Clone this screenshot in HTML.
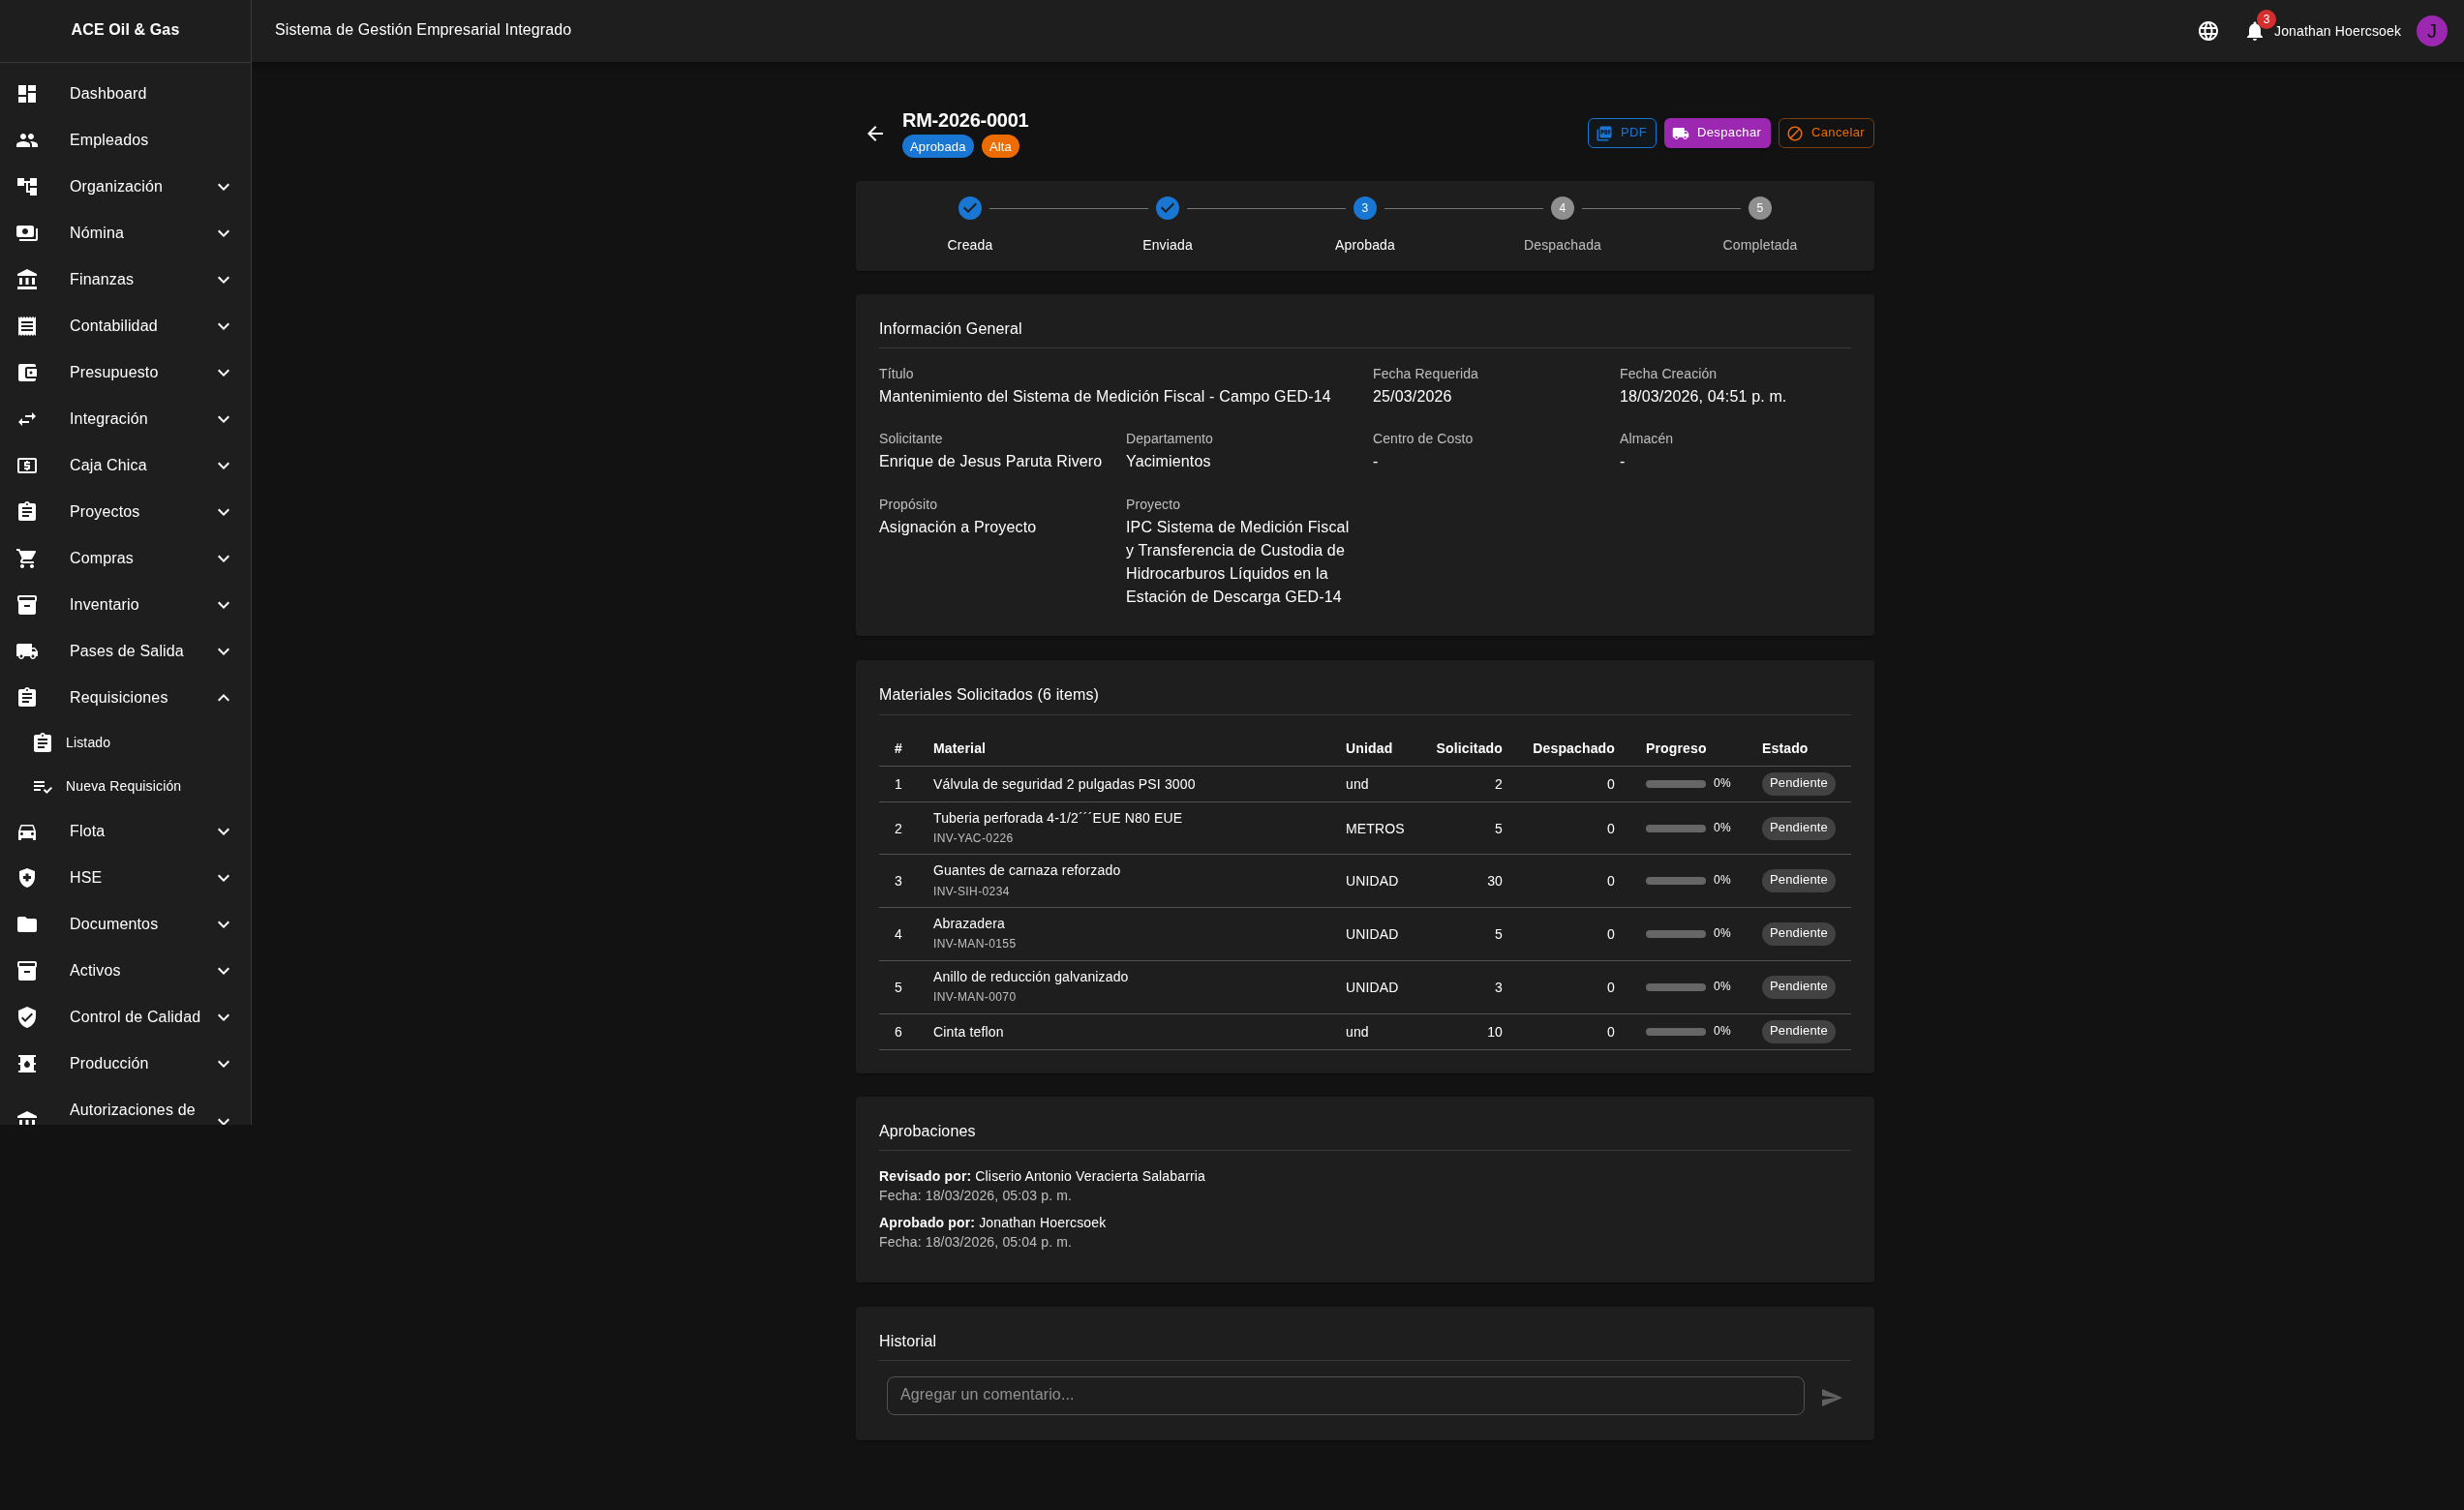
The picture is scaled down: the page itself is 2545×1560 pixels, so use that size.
<!DOCTYPE html>
<html lang="es">
<head>
<meta charset="utf-8">
<title>RM-2026-0001</title>
<style>
*{box-sizing:border-box;margin:0;padding:0}
html,body{width:2545px;height:1560px;overflow:hidden}
body{background:#121212;color:#fff;font-family:"Liberation Sans",sans-serif;font-size:16px;letter-spacing:.15px;position:relative}
.abs{position:absolute}
svg{display:block;fill:currentColor}
/* sidebar */
#side{position:absolute;z-index:2;left:0;top:0;width:260px;height:1162px;background:#1e1e1e;border-right:1px solid rgba(255,255,255,.12);overflow:hidden}
#side .brand{height:65px;border-bottom:1px solid rgba(255,255,255,.12);text-align:center;font-weight:700;font-size:16px;line-height:62px;letter-spacing:.12px}
#side ul{list-style:none;padding-top:8px}
#side li{position:relative;height:48px;display:flex;align-items:center}
#side li .ic{position:absolute;left:16px;top:12px;width:24px;height:24px}
#side li .tx{position:absolute;left:72px;top:12px;line-height:24px;font-size:16px;white-space:nowrap}
#side li .ch{position:absolute;left:219px;top:12px;width:24px;height:24px}
#side li.sub{height:45px}
#side li.sub .ic{left:32px;top:11px}
#side li.sub .tx{left:68px;top:12px;font-size:14px;line-height:21px}
#side li.two{height:72px}
#side li.two .ic{top:24px}
#side li.two .ch{top:24px}
#side li.two .tx{top:12px;white-space:normal;width:140px}
/* appbar */
#bar{position:absolute;z-index:1;left:260px;top:0;width:2285px;height:64px;background:#1e1e1e;box-shadow:0 2px 4px -1px rgba(0,0,0,.2),0 4px 5px 0 rgba(0,0,0,.14),0 1px 10px 0 rgba(0,0,0,.12)}
#bar .title{position:absolute;left:24px;top:19px;line-height:24px;font-size:16px;letter-spacing:.12px}
/* papers */
.paper{position:absolute;left:884px;width:1052px;background:#1e1e1e;border-radius:4px;box-shadow:0 2px 1px -1px rgba(0,0,0,.2),0 1px 1px 0 rgba(0,0,0,.14),0 1px 3px 0 rgba(0,0,0,.12)}
.ptitle{position:absolute;left:24px;line-height:24px;font-size:16px;white-space:nowrap}
.pdiv{position:absolute;left:24px;right:24px;height:1px;background:rgba(255,255,255,.12)}
.lbl{position:absolute;font-size:14px;line-height:22px;color:rgba(255,255,255,.7);letter-spacing:.1px;white-space:nowrap}
.val{position:absolute;font-size:16px;line-height:24px;white-space:nowrap}
.chip{position:absolute;height:24px;border-radius:12px;font-size:13px;line-height:24px;padding:0 8px;white-space:nowrap}
.btn{position:absolute;height:31px;border-radius:6px;font-size:13px;line-height:23px;letter-spacing:.37px;white-space:nowrap}
.conn{position:absolute;top:215px;height:1px;background:#757575}
.sicon{position:absolute;top:203px;width:24px;height:24px;border-radius:12px;font-size:12px;line-height:24px;text-align:center;letter-spacing:.4px}
.slbl{position:absolute;top:243px;width:204px;text-align:center;font-size:14px;line-height:20px}
.hdiv{position:absolute;left:908px;width:1004px;height:1px;background:rgba(255,255,255,.12)}
.th{position:absolute;top:761px;font-size:14px;font-weight:700;line-height:24px;white-space:nowrap}
.td{position:absolute;font-size:14px;line-height:20px;white-space:nowrap}
.td b{font-weight:700}
.r{width:100px;text-align:right}
.sec{color:rgba(255,255,255,.7)}
.cap{position:absolute;font-size:12px;line-height:20px;letter-spacing:.4px;color:rgba(255,255,255,.7);white-space:nowrap}
.tb{position:absolute;left:908px;width:1004px;height:1px;background:#515151}
.bar{position:absolute;left:1700px;width:62px;height:8px;border-radius:4px;background:#666}
</style>
</head>
<body>
<div id="root" style="position:absolute;left:0;top:0;width:2545px;height:1560px;will-change:transform">
<!-- SIDEBAR -->
<div id="side">
  <div class="brand">ACE Oil &amp; Gas</div>
  <ul>
    <li><svg class="ic" viewBox="0 0 24 24"><path d="M3 13h8V3H3v10zm0 8h8v-6H3v6zm10 0h8V11h-8v10zm0-18v6h8V3h-8z"/></svg><span class="tx">Dashboard</span></li>
    <li><svg class="ic" viewBox="0 0 24 24"><path d="M16 11c1.66 0 2.99-1.34 2.99-3S17.66 5 16 5c-1.66 0-3 1.34-3 3s1.34 3 3 3zm-8 0c1.66 0 2.99-1.34 2.99-3S9.66 5 8 5C6.34 5 5 6.34 5 8s1.34 3 3 3zm0 2c-2.33 0-7 1.17-7 3.5V19h14v-2.5c0-2.33-4.67-3.5-7-3.5zm8 0c-.29 0-.62.02-.97.05 1.16.84 1.97 1.97 1.97 3.45V19h6v-2.5c0-2.33-4.67-3.5-7-3.5z"/></svg><span class="tx">Empleados</span></li>
    <li><svg class="ic" viewBox="0 0 24 24"><path d="M22 11V3h-7v3H9V3H2v8h7V8h2v10h4v3h7v-8h-7v3h-2V8h2v3z"/></svg><span class="tx">Organización</span><svg class="ch" viewBox="0 0 24 24"><path d="M16.59 8.59 12 13.17 7.41 8.59 6 10l6 6 6-6z"/></svg></li>
    <li><svg class="ic" viewBox="0 0 24 24"><path d="M19 14V6c0-1.1-.9-2-2-2H3c-1.1 0-2 .9-2 2v8c0 1.1.9 2 2 2h14c1.1 0 2-.9 2-2zm-9-1c-1.66 0-3-1.34-3-3s1.34-3 3-3 3 1.34 3 3-1.34 3-3 3zm13-6v11c0 1.1-.9 2-2 2H4v-2h17V7h2z"/></svg><span class="tx">Nómina</span><svg class="ch" viewBox="0 0 24 24"><path d="M16.59 8.59 12 13.17 7.41 8.59 6 10l6 6 6-6z"/></svg></li>
    <li><svg class="ic" viewBox="0 0 24 24"><path d="M4 10h3v7H4zm6.5 0h3v7h-3zM2 19h20v3H2zm15-9h3v7h-3zm-5-9L2 6v2h20V6z"/></svg><span class="tx">Finanzas</span><svg class="ch" viewBox="0 0 24 24"><path d="M16.59 8.59 12 13.17 7.41 8.59 6 10l6 6 6-6z"/></svg></li>
    <li><svg class="ic" viewBox="0 0 24 24"><path d="M18 17H6v-2h12v2zm0-4H6v-2h12v2zm0-4H6V7h12v2zM3 22l1.5-1.5L6 22l1.5-1.5L9 22l1.5-1.5L12 22l1.5-1.5L15 22l1.5-1.5L18 22l1.5-1.5L21 22V2l-1.5 1.5L18 2l-1.5 1.5L15 2l-1.5 1.5L12 2l-1.5 1.5L9 2 7.5 3.5 6 2 4.5 3.5 3 2v20z"/></svg><span class="tx">Contabilidad</span><svg class="ch" viewBox="0 0 24 24"><path d="M16.59 8.59 12 13.17 7.41 8.59 6 10l6 6 6-6z"/></svg></li>
    <li><svg class="ic" viewBox="0 0 24 24"><path d="M21 18v1c0 1.1-.9 2-2 2H5c-1.11 0-2-.9-2-2V5c0-1.1.89-2 2-2h14c1.1 0 2 .9 2 2v1h-9c-1.11 0-2 .9-2 2v8c0 1.1.89 2 2 2h9zm-9-2h10V8H12v8zm4-2.5c-.83 0-1.5-.67-1.5-1.5s.67-1.5 1.5-1.5 1.5.67 1.5 1.5-.67 1.5-1.5 1.5z"/></svg><span class="tx">Presupuesto</span><svg class="ch" viewBox="0 0 24 24"><path d="M16.59 8.59 12 13.17 7.41 8.59 6 10l6 6 6-6z"/></svg></li>
    <li><svg class="ic" viewBox="0 0 24 24"><path d="M6.99 11 3 15l3.99 4v-3H14v-2H6.99v-3zM21 9l-3.99-4v3H10v2h7.01v3L21 9z"/></svg><span class="tx">Integración</span><svg class="ch" viewBox="0 0 24 24"><path d="M16.59 8.59 12 13.17 7.41 8.59 6 10l6 6 6-6z"/></svg></li>
    <li><svg class="ic" viewBox="0 0 24 24"><path d="M11 17h2v-1h1c.55 0 1-.45 1-1v-3c0-.55-.45-1-1-1h-3v-1h4V8h-2V7h-2v1h-1c-.55 0-1 .45-1 1v3c0 .55.45 1 1 1h3v1H9v2h2v1zm9-13H4c-1.11 0-1.99.89-1.99 2L2 18c0 1.11.89 2 2 2h16c1.11 0 2-.89 2-2V6c0-1.11-.89-2-2-2zm0 14H4V6h16v12z"/></svg><span class="tx">Caja Chica</span><svg class="ch" viewBox="0 0 24 24"><path d="M16.59 8.59 12 13.17 7.41 8.59 6 10l6 6 6-6z"/></svg></li>
    <li><svg class="ic" viewBox="0 0 24 24"><path d="M19 3h-4.18C14.4 1.84 13.3 1 12 1c-1.3 0-2.4.84-2.82 2H5c-1.1 0-2 .9-2 2v14c0 1.1.9 2 2 2h14c1.1 0 2-.9 2-2V5c0-1.1-.9-2-2-2zm-7 0c.55 0 1 .45 1 1s-.45 1-1 1-1-.45-1-1 .45-1 1-1zm2 14H7v-2h7v2zm3-4H7v-2h10v2zm0-4H7V7h10v2z"/></svg><span class="tx">Proyectos</span><svg class="ch" viewBox="0 0 24 24"><path d="M16.59 8.59 12 13.17 7.41 8.59 6 10l6 6 6-6z"/></svg></li>
    <li><svg class="ic" viewBox="0 0 24 24"><path d="M7 18c-1.1 0-1.99.9-1.99 2S5.9 22 7 22s2-.9 2-2-.9-2-2-2zM1 2v2h2l3.6 7.59-1.35 2.45c-.16.28-.25.61-.25.96 0 1.1.9 2 2 2h12v-2H7.42c-.14 0-.25-.11-.25-.25l.03-.12.9-1.63h7.45c.75 0 1.41-.41 1.75-1.03l3.58-6.49c.08-.14.12-.31.12-.48 0-.55-.45-1-1-1H5.21l-.94-2H1zm16 16c-1.1 0-1.99.9-1.99 2s.89 2 1.99 2 2-.9 2-2-.9-2-2-2z"/></svg><span class="tx">Compras</span><svg class="ch" viewBox="0 0 24 24"><path d="M16.59 8.59 12 13.17 7.41 8.59 6 10l6 6 6-6z"/></svg></li>
    <li><svg class="ic" viewBox="0 0 24 24"><path d="M20 2H4c-1 0-2 .9-2 2v3.01c0 .72.43 1.34 1 1.69V20c0 1.1 1.1 2 2 2h14c.9 0 2-.9 2-2V8.7c.57-.35 1-.97 1-1.69V4c0-1.1-1-2-2-2zm-5 12H9v-2h6v2zm5-7H4V4l16-.02V7z"/></svg><span class="tx">Inventario</span><svg class="ch" viewBox="0 0 24 24"><path d="M16.59 8.59 12 13.17 7.41 8.59 6 10l6 6 6-6z"/></svg></li>
    <li><svg class="ic" viewBox="0 0 24 24"><path d="M20 8h-3V4H3c-1.1 0-2 .9-2 2v11h2c0 1.66 1.34 3 3 3s3-1.34 3-3h6c0 1.66 1.34 3 3 3s3-1.34 3-3h2v-5l-3-4zM6 18.5c-.83 0-1.5-.67-1.5-1.5s.67-1.5 1.5-1.5 1.5.67 1.5 1.5-.67 1.5-1.5 1.5zm13.5-9 1.96 2.5H17V9.5h2.5zm-1.5 9c-.83 0-1.5-.67-1.5-1.5s.67-1.5 1.5-1.5 1.5.67 1.5 1.5-.67 1.5-1.5 1.5z"/></svg><span class="tx">Pases de Salida</span><svg class="ch" viewBox="0 0 24 24"><path d="M16.59 8.59 12 13.17 7.41 8.59 6 10l6 6 6-6z"/></svg></li>
    <li><svg class="ic" viewBox="0 0 24 24"><path d="M19 3h-4.18C14.4 1.840 13.3 1 12 1c-1.3 0-2.4.84-2.820 2H5c-1.1 0-2 .9-2 2v14c0 1.1.9 2 2 2h14c1.1 0 2-.9 2-2V5c0-1.1-.9-2-2-2zm-7 0c.55 0 1 .45 1 1s-.45 1-1 1-1-.45-1-1 .45-1 1-1zm2 14H7v-2h7v2zm3-4H7v-2h10v2zm0-4H7V7h10v2z"/></svg><span class="tx">Requisiciones</span><svg class="ch" viewBox="0 0 24 24"><path d="m12 8-6 6 1.41 1.41L12 10.83l4.59 4.58L18 14z"/></svg></li>
    <li class="sub"><svg class="ic" viewBox="0 0 24 24"><path d="M19 3h-4.18C14.4 1.84 13.3 1 12 1c-1.3 0-2.4.84-2.82 2H5c-1.1 0-2 .9-2 2v14c0 1.1.9 2 2 2h14c1.1 0 2-.9 2-2V5c0-1.1-.9-2-2-2zm-7 0c.55 0 1 .45 1 1s-.45 1-1 1-1-.45-1-1 .45-1 1-1zm2 14H7v-2h7v2zm3-4H7v-2h10v2zm0-4H7V7h10v2z"/></svg><span class="tx">Listado</span></li>
    <li class="sub"><svg class="ic" viewBox="0 0 24 24"><path d="M14 10H3v2h11v-2zm0-4H3v2h11V6zM3 16h7v-2H3v2zm17.59-4.07-4.25 4.24-2.12-2.12-1.41 1.41L16.34 19 22 13.34l-1.41-1.41z"/></svg><span class="tx">Nueva Requisición</span></li>
    <li><svg class="ic" viewBox="0 0 24 24"><path d="M18.92 6.01C18.72 5.42 18.16 5 17.5 5h-11c-.66 0-1.21.42-1.42 1.01L3 12v8c0 .55.45 1 1 1h1c.55 0 1-.45 1-1v-1h12v1c0 .55.45 1 1 1h1c.55 0 1-.45 1-1v-8l-2.08-5.99zM6.5 16c-.83 0-1.5-.67-1.5-1.5S5.67 13 6.5 13s1.5.67 1.5 1.5S7.33 16 6.5 16zm11 0c-.83 0-1.5-.67-1.5-1.5s.67-1.5 1.5-1.5 1.5.67 1.5 1.5-.67 1.5-1.5 1.5zM5 11l1.5-4.5h11L19 11H5z"/></svg><span class="tx">Flota</span><svg class="ch" viewBox="0 0 24 24"><path d="M16.59 8.59 12 13.17 7.41 8.59 6 10l6 6 6-6z"/></svg></li>
    <li><svg class="ic" viewBox="0 0 24 24"><path d="M10.5 13H8v-3h2.5V7.5h3V10H16v3h-2.5v2.5h-3V13zM12 2 4 5v6.09c0 5.05 3.410 9.76 8 10.91 4.59-1.15 8-5.86 8-10.91V5l-8-3z"/></svg><span class="tx">HSE</span><svg class="ch" viewBox="0 0 24 24"><path d="M16.59 8.59 12 13.17 7.41 8.59 6 10l6 6 6-6z"/></svg></li>
    <li><svg class="ic" viewBox="0 0 24 24"><path d="M10 4H4c-1.1 0-1.99.9-1.99 2L2 18c0 1.1.9 2 2 2h16c1.1 0 2-.9 2-2V8c0-1.1-.9-2-2-2h-8l-2-2z"/></svg><span class="tx">Documentos</span><svg class="ch" viewBox="0 0 24 24"><path d="M16.59 8.59 12 13.17 7.41 8.59 6 10l6 6 6-6z"/></svg></li>
    <li><svg class="ic" viewBox="0 0 24 24"><path d="M20 2H4c-1 0-2 .9-2 2v3.01c0 .72.43 1.34 1 1.69V20c0 1.1 1.1 2 2 2h14c.9 0 2-.9 2-2V8.7c.57-.35 1-.97 1-1.69V4c0-1.1-1-2-2-2zm-5 12H9v-2h6v2zm5-7H4V4l16-.02V7z"/></svg><span class="tx">Activos</span><svg class="ch" viewBox="0 0 24 24"><path d="M16.59 8.59 12 13.17 7.41 8.59 6 10l6 6 6-6z"/></svg></li>
    <li><svg class="ic" viewBox="0 0 24 24"><path d="M12 1 3 5v6c0 5.55 3.84 10.74 9 12 5.16-1.26 9-6.45 9-12V5l-9-4zm-2 16-4-4 1.41-1.41L10 14.17l6.59-6.59L18 9l-8 8z"/></svg><span class="tx">Control de Calidad</span><svg class="ch" viewBox="0 0 24 24"><path d="M16.59 8.59 12 13.17 7.41 8.59 6 10l6 6 6-6z"/></svg></li>
    <li><svg class="ic" viewBox="0 0 24 24"><path d="M5 19v-6H3v-2h2V5H3V3h18v2h-2v6h2v2h-2v6h2v2H3v-2h2zm7-3c1.66 0 3-1.32 3-2.95 0-1.3-.52-1.69-3-4.55-2.49 2.87-3 3.27-3 4.55C9 14.68 10.34 16 12 16z"/></svg><span class="tx">Producción</span><svg class="ch" viewBox="0 0 24 24"><path d="M16.59 8.59 12 13.17 7.41 8.59 6 10l6 6 6-6z"/></svg></li>
    <li class="two"><svg class="ic" viewBox="0 0 24 24"><path d="M4 10h3v7H4zm6.5 0h3v7h-3zM2 19h20v3H2zm15-9h3v7h-3zm-5-9L2 6v2h20V6z"/></svg><span class="tx">Autorizaciones de Firma</span><svg class="ch" viewBox="0 0 24 24"><path d="M16.59 8.59 12 13.17 7.41 8.59 6 10l6 6 6-6z"/></svg></li>
  </ul>
</div>

<!-- APPBAR -->
<div id="bar">
  <div class="title">Sistema de Gestión Empresarial Integrado</div>
</div>

<!-- CONTENT -->
<!-- APPBAR RIGHT -->
<svg class="abs" style="z-index:3;left:2269px;top:20px;width:24px;height:24px" viewBox="0 0 24 24"><path d="M11.99 2C6.47 2 2 6.48 2 12s4.47 10 9.99 10C17.52 22 22 17.52 22 12S17.52 2 11.99 2zm6.93 6h-2.95c-.32-1.25-.78-2.45-1.38-3.56 1.84.63 3.37 1.91 4.33 3.56zM12 4.04c.83 1.2 1.48 2.53 1.91 3.96h-3.82c.43-1.43 1.08-2.76 1.910-3.96zM4.26 14C4.1 13.36 4 12.69 4 12s.1-1.36.26-2h3.38c-.08.66-.14 1.32-.14 2 0 .68.06 1.34.14 2H4.26zm.82 2h2.95c.32 1.25.78 2.45 1.38 3.56-1.84-.63-3.37-1.9-4.33-3.56zm2.95-8H5.08c.96-1.66 2.49-2.93 4.33-3.56C8.81 5.55 8.35 6.75 8.03 8zM12 19.96c-.83-1.2-1.48-2.53-1.91-3.96h3.82c-.43 1.43-1.08 2.76-1.91 3.96zM14.34 14H9.66c-.09-.66-.16-1.32-.16-2 0-.68.07-1.35.16-2h4.68c.09.65.16 1.32.16 2 0 .68-.07 1.34-.16 2zm.25 5.56c.6-1.11 1.06-2.31 1.38-3.56h2.95c-.96 1.65-2.49 2.93-4.33 3.56zM16.36 14c.08-.66.14-1.32.14-2 0-.68-.06-1.34-.14-2h3.38c.16.64.26 1.31.26 2s-.1 1.360-.26 2h-3.38z"/></svg>
<svg class="abs" style="z-index:3;left:2317px;top:20px;width:24px;height:24px" viewBox="0 0 24 24"><path d="M12 22c1.1 0 2-.9 2-2h-4c0 1.1.89 2 2 2zm6-6v-5c0-3.07-1.64-5.64-4.5-6.32V4c0-.83-.67-1.5-1.5-1.5s-1.5.67-1.5 1.5v.68C7.63 5.36 6 7.92 6 11v5l-2 2v1h16v-1l-2-2z"/></svg>
<div class="abs" style="z-index:3;left:2331px;top:10px;width:20px;height:20px;border-radius:10px;background:#d32f2f;font-size:12px;line-height:20px;text-align:center;letter-spacing:0">3</div>
<div class="abs" style="z-index:3;left:2349px;top:22px;font-size:14px;line-height:20px;white-space:nowrap">Jonathan Hoercsoek</div>
<div class="abs" style="z-index:3;left:2496px;top:16px;width:32px;height:32px;border-radius:16px;background:#9c27b0;color:#121212;font-size:20px;line-height:32px;text-align:center;letter-spacing:0">J</div>

<!-- PAGE HEADER -->
<svg class="abs" style="left:892px;top:126px;width:24px;height:24px" viewBox="0 0 24 24"><path d="M20 11H7.83l5.59-5.59L12 4l-8 8 8 8 1.41-1.41L7.83 13H20v-2z"/></svg>
<div class="abs" style="left:932px;top:108px;font-size:20px;line-height:32px;font-weight:700;white-space:nowrap;letter-spacing:-.25px">RM-2026-0001</div>
<div class="chip" style="left:932px;top:139px;background:#1976d2;padding-top:1px">Aprobada</div>
<div class="chip" style="left:1014px;top:139px;background:#ed6c02;padding-top:1px">Alta</div>

<div class="btn" style="left:1640px;top:122px;width:71px;border:1px solid #1976d2;color:#1976d2;background:rgba(25,118,210,.05)">
  <svg style="position:absolute;left:7px;top:6px;width:18px;height:18px" viewBox="0 0 24 24"><path d="M20 2H8c-1.1 0-2 .9-2 2v12c0 1.1.9 2 2 2h12c1.1 0 2-.9 2-2V4c0-1.1-.9-2-2-2zm-8.5 7.5c0 .83-.67 1.5-1.5 1.5H9v2H7.5V7H10c.83 0 1.5.67 1.5 1.5v1zm5 2c0 .83-.67 1.5-1.5 1.5h-2.5V7H15c.83 0 1.5.67 1.5 1.5v3zm4-3H19v1h1.5V11H19v2h-1.5V7h3v1.5zM9 9.5h1v-1H9v1zM4 6H2v14c0 1.1.9 2 2 2h14v-2H4V6zm10 5.5h1v-3h-1v3z"/></svg>
  <span style="position:absolute;left:33px;top:2px">PDF</span>
</div>
<div class="btn" style="left:1719px;top:122px;width:110px;background:#9c27b0;color:#fff;box-shadow:0 3px 1px -2px rgba(0,0,0,.2),0 2px 2px 0 rgba(0,0,0,.14),0 1px 5px 0 rgba(0,0,0,.12)">
  <svg style="position:absolute;left:8px;top:7px;width:18px;height:18px" viewBox="0 0 24 24"><path d="M20 8h-3V4H3c-1.1 0-2 .9-2 2v11h2c0 1.66 1.34 3 3 3s3-1.34 3-3h6c0 1.66 1.34 3 3 3s3-1.34 3-3h2v-5l-3-4zM6 18.5c-.83 0-1.5-.67-1.5-1.5s.67-1.5 1.5-1.5 1.5.67 1.5 1.5-.67 1.5-1.5 1.5zm13.5-9 1.96 2.5H17V9.5h2.5zm-1.5 9c-.83 0-1.5-.67-1.5-1.5s.67-1.5 1.5-1.5 1.5.67 1.5 1.5-.67 1.5-1.5 1.5z"/></svg>
  <span style="position:absolute;left:34px;top:3px">Despachar</span>
</div>
<div class="btn" style="left:1837px;top:122px;width:99px;border:1px solid rgba(237,108,2,.5);color:#ed6c02">
  <svg style="position:absolute;left:7px;top:6px;width:18px;height:18px" viewBox="0 0 24 24"><path d="M12 2C6.48 2 2 6.48 2 12s4.48 10 10 10 10-4.48 10-10S17.52 2 12 2zM4 12c0-4.42 3.58-8 8-8 1.85 0 3.55.63 4.9 1.69L5.69 16.9C4.63 15.55 4 13.85 4 12zm8 8c-1.85 0-3.55-.63-4.9-1.69L18.31 7.1C19.37 8.45 20 10.15 20 12c0 4.42-3.58 8-8 8z"/></svg>
  <span style="position:absolute;left:33px;top:2px">Cancelar</span>
</div>

<!-- STEPPER -->
<div class="paper" style="top:187px;height:93px"></div>
<div class="conn" style="left:1022px;width:164px"></div>
<div class="conn" style="left:1226px;width:164px"></div>
<div class="conn" style="left:1430px;width:164px"></div>
<div class="conn" style="left:1634px;width:164px"></div>
<svg class="abs" style="left:990px;top:203px;width:24px;height:24px;color:#1976d2" viewBox="0 0 24 24"><path d="M12 0a12 12 0 1 0 0 24 12 12 0 0 0 0-24zm-2 17l-5-5 1.4-1.4 3.6 3.6 7.6-7.6L19 8l-9 9z"/></svg>
<svg class="abs" style="left:1194px;top:203px;width:24px;height:24px;color:#1976d2" viewBox="0 0 24 24"><path d="M12 0a12 12 0 1 0 0 24 12 12 0 0 0 0-24zm-2 17l-5-5 1.4-1.4 3.6 3.6 7.6-7.6L19 8l-9 9z"/></svg>
<div class="sicon" style="left:1398px;background:#1976d2">3</div>
<div class="sicon" style="left:1602px;background:#8f8f8f">4</div>
<div class="sicon" style="left:1806px;background:#8f8f8f">5</div>
<div class="slbl" style="left:900px">Creada</div>
<div class="slbl" style="left:1104px">Enviada</div>
<div class="slbl" style="left:1308px">Aprobada</div>
<div class="slbl" style="left:1512px;color:rgba(255,255,255,.7)">Despachada</div>
<div class="slbl" style="left:1716px;color:rgba(255,255,255,.7)">Completada</div>

<!-- INFO GENERAL -->
<div class="paper" style="top:304px;height:353px"></div>
<div class="ptitle" style="left:908px;top:328px">Información General</div>
<div class="hdiv" style="top:359px"></div>
<div class="lbl" style="left:908px;top:375px">Título</div>
<div class="val" style="left:908px;top:398px">Mantenimiento del Sistema de Medición Fiscal - Campo GED-14</div>
<div class="lbl" style="left:1418px;top:375px">Fecha Requerida</div>
<div class="val" style="left:1418px;top:398px">25/03/2026</div>
<div class="lbl" style="left:1673px;top:375px">Fecha Creación</div>
<div class="val" style="left:1673px;top:398px">18/03/2026, 04:51 p. m.</div>
<div class="lbl" style="left:908px;top:442px">Solicitante</div>
<div class="val" style="left:908px;top:465px">Enrique de Jesus Paruta Rivero</div>
<div class="lbl" style="left:1163px;top:442px">Departamento</div>
<div class="val" style="left:1163px;top:465px">Yacimientos</div>
<div class="lbl" style="left:1418px;top:442px">Centro de Costo</div>
<div class="val" style="left:1418px;top:465px">-</div>
<div class="lbl" style="left:1673px;top:442px">Almacén</div>
<div class="val" style="left:1673px;top:465px">-</div>
<div class="lbl" style="left:908px;top:510px">Propósito</div>
<div class="val" style="left:908px;top:533px">Asignación a Proyecto</div>
<div class="lbl" style="left:1163px;top:510px">Proyecto</div>
<div class="val" style="left:1163px;top:533px;white-space:normal;width:239px">IPC Sistema de Medición Fiscal y Transferencia de Custodia de Hidrocarburos Líquidos en la Estación de Descarga GED-14</div>

<!-- MATERIALES -->
<div class="paper" style="top:682px;height:427px"></div>
<div class="ptitle" style="left:908px;top:706px">Materiales Solicitados (6 items)</div>
<div class="hdiv" style="top:738px"></div>
<div class="th" style="left:924px">#</div>
<div class="th" style="left:964px">Material</div>
<div class="th" style="left:1390px">Unidad</div>
<div class="th r" style="left:1452px">Solicitado</div>
<div class="th r" style="left:1568px">Despachado</div>
<div class="th" style="left:1700px">Progreso</div>
<div class="th" style="left:1820px">Estado</div>
<div class="tb" style="top:791px"></div>
<div class="tb" style="top:828px"></div>
<div class="tb" style="top:882px"></div>
<div class="tb" style="top:937px"></div>
<div class="tb" style="top:992px"></div>
<div class="tb" style="top:1047px"></div>
<div class="tb" style="top:1084px"></div>
<div class="td" style="left:924px;top:800px">1</div>
<div class="td" style="left:964px;top:800px">Válvula de seguridad 2 pulgadas PSI 3000</div>
<div class="td" style="left:1390px;top:800px">und</div>
<div class="td r" style="left:1452px;top:800px">2</div>
<div class="td r" style="left:1568px;top:800px">0</div>
<div class="bar" style="top:806px"></div>
<div class="cap" style="left:1770px;top:799px;color:#fff">0%</div>
<div class="chip" style="left:1820px;top:798px;background:rgba(255,255,255,.16);line-height:22px">Pendiente</div>
<div class="td" style="left:924px;top:846px">2</div>
<div class="td" style="left:964px;top:835px">Tuberia perforada 4-1/2´´´EUE N80 EUE</div>
<div class="cap" style="left:964px;top:856px">INV-YAC-0226</div>
<div class="td" style="left:1390px;top:846px">METROS</div>
<div class="td r" style="left:1452px;top:846px">5</div>
<div class="td r" style="left:1568px;top:846px">0</div>
<div class="bar" style="top:852px"></div>
<div class="cap" style="left:1770px;top:845px;color:#fff">0%</div>
<div class="chip" style="left:1820px;top:844px;background:rgba(255,255,255,.16);line-height:22px">Pendiente</div>
<div class="td" style="left:924px;top:900px">3</div>
<div class="td" style="left:964px;top:889px">Guantes de carnaza reforzado</div>
<div class="cap" style="left:964px;top:911px">INV-SIH-0234</div>
<div class="td" style="left:1390px;top:900px">UNIDAD</div>
<div class="td r" style="left:1452px;top:900px">30</div>
<div class="td r" style="left:1568px;top:900px">0</div>
<div class="bar" style="top:906px"></div>
<div class="cap" style="left:1770px;top:899px;color:#fff">0%</div>
<div class="chip" style="left:1820px;top:898px;background:rgba(255,255,255,.16);line-height:22px">Pendiente</div>
<div class="td" style="left:924px;top:955px">4</div>
<div class="td" style="left:964px;top:944px">Abrazadera</div>
<div class="cap" style="left:964px;top:965px">INV-MAN-0155</div>
<div class="td" style="left:1390px;top:955px">UNIDAD</div>
<div class="td r" style="left:1452px;top:955px">5</div>
<div class="td r" style="left:1568px;top:955px">0</div>
<div class="bar" style="top:961px"></div>
<div class="cap" style="left:1770px;top:954px;color:#fff">0%</div>
<div class="chip" style="left:1820px;top:953px;background:rgba(255,255,255,.16);line-height:22px">Pendiente</div>
<div class="td" style="left:924px;top:1010px">5</div>
<div class="td" style="left:964px;top:999px">Anillo de reducción galvanizado</div>
<div class="cap" style="left:964px;top:1020px">INV-MAN-0070</div>
<div class="td" style="left:1390px;top:1010px">UNIDAD</div>
<div class="td r" style="left:1452px;top:1010px">3</div>
<div class="td r" style="left:1568px;top:1010px">0</div>
<div class="bar" style="top:1016px"></div>
<div class="cap" style="left:1770px;top:1009px;color:#fff">0%</div>
<div class="chip" style="left:1820px;top:1008px;background:rgba(255,255,255,.16);line-height:22px">Pendiente</div>
<div class="td" style="left:924px;top:1056px">6</div>
<div class="td" style="left:964px;top:1056px">Cinta teflon</div>
<div class="td" style="left:1390px;top:1056px">und</div>
<div class="td r" style="left:1452px;top:1056px">10</div>
<div class="td r" style="left:1568px;top:1056px">0</div>
<div class="bar" style="top:1062px"></div>
<div class="cap" style="left:1770px;top:1055px;color:#fff">0%</div>
<div class="chip" style="left:1820px;top:1054px;background:rgba(255,255,255,.16);line-height:22px">Pendiente</div>

<!-- APROBACIONES -->
<div class="paper" style="top:1133px;height:192px"></div>
<div class="ptitle" style="left:908px;top:1157px">Aprobaciones</div>
<div class="hdiv" style="top:1188px"></div>
<div class="td" style="left:908px;top:1205px"><b>Revisado por:</b> Cliserio Antonio Veracierta Salabarria</div>
<div class="td sec" style="left:908px;top:1225px">Fecha: 18/03/2026, 05:03 p. m.</div>
<div class="td" style="left:908px;top:1253px"><b>Aprobado por:</b> Jonathan Hoercsoek</div>
<div class="td sec" style="left:908px;top:1273px">Fecha: 18/03/2026, 05:04 p. m.</div>

<!-- HISTORIAL -->
<div class="paper" style="top:1350px;height:138px"></div>
<div class="ptitle" style="left:908px;top:1374px">Historial</div>
<div class="hdiv" style="top:1405px"></div>
<div class="abs" style="left:916px;top:1422px;width:948px;height:40px;border:1px solid rgba(255,255,255,.23);border-radius:8px"></div>
<div class="abs" style="left:930px;top:1429px;font-size:16px;line-height:23px;color:rgba(255,255,255,.5);white-space:nowrap">Agregar un comentario...</div>
<svg class="abs" style="left:1880px;top:1432px;width:24px;height:24px;color:rgba(255,255,255,.3)" viewBox="0 0 24 24"><path d="M2.01 21 23 12 2.01 3 2 10l15 2-15 2z"/></svg>

</div>
</body>
</html>
